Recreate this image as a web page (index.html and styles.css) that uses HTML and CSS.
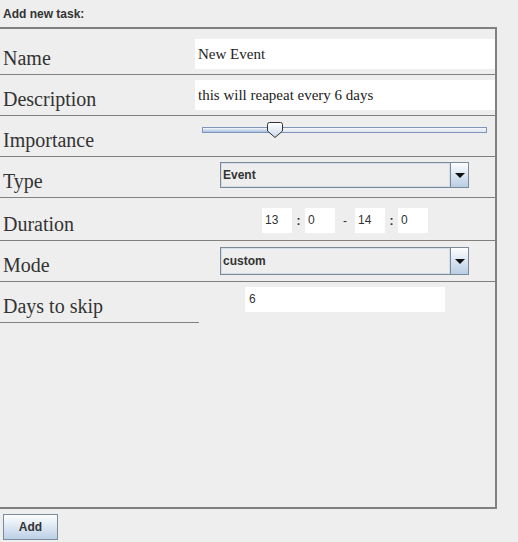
FILE: index.html
```html
<!DOCTYPE html>
<html>
<head>
<meta charset="utf-8">
<title>Add new task</title>
<link rel="stylesheet" href="styles.css">
</head>
<body>
<div class="title">Add new task:</div>
<div class="panel">
  <div class="row r1">
    <div class="label">Name</div>
    <div class="cell"><div class="field">New Event</div></div>
  </div>
  <div class="row r2">
    <div class="label">Description</div>
    <div class="cell"><div class="field">this will reapeat every 6 days</div></div>
  </div>
  <div class="row r3">
    <div class="label">Importance</div>
    <div class="cell">
      <div class="slider">
        <div class="track"><div class="fill"></div></div>
        <svg class="thumb" width="16" height="16" viewBox="0 0 16 16">
          <defs>
            <linearGradient id="tg" x1="0" y1="0" x2="0" y2="1">
              <stop offset="0" stop-color="#ffffff"/>
              <stop offset="1" stop-color="#c9d8ec"/>
            </linearGradient>
          </defs>
          <path d="M2.5 0.5 H13.5 Q15.5 0.5 15.5 2.5 V9 L8 15.5 L0.5 9 V2.5 Q0.5 0.5 2.5 0.5 Z" fill="url(#tg)" stroke="#333" stroke-width="1"/>
        </svg>
      </div>
    </div>
  </div>
  <div class="row r4">
    <div class="label">Type</div>
    <div class="cell">
      <div class="combo">
        <div class="combo-text">Event</div>
        <div class="combo-btn"><span class="arrow"></span></div>
      </div>
    </div>
  </div>
  <div class="row r5">
    <div class="label">Duration</div>
    <div class="cell">
      <div class="duration">
        <div class="num">13</div>
        <span class="sep colon">:</span>
        <div class="num">0</div>
        <span class="sep dash">-</span>
        <div class="num">14</div>
        <span class="sep colon">:</span>
        <div class="num">0</div>
      </div>
    </div>
  </div>
  <div class="row r6">
    <div class="label">Mode</div>
    <div class="cell">
      <div class="combo tall">
        <div class="combo-text">custom</div>
        <div class="combo-btn"><span class="arrow"></span></div>
      </div>
    </div>
  </div>
  <div class="row r7">
    <div class="label">Days to skip</div>
    <div class="cell"><div class="days">6</div></div>
  </div>
</div>
<div class="footer"><button class="btn">Add</button></div>
</body>
</html>
```

FILE: styles.css
```css
html, body {
  margin: 0;
  padding: 0;
}
body {
  background: #eeeeee;
  width: 518px;
  height: 542px;
  overflow: hidden;
  font-family: "Liberation Sans", Arial, sans-serif;
  color: #333;
}
.title {
  height: 27px;
  box-sizing: border-box;
  padding: 7px 0 0 3px;
  font-size: 12px;
  line-height: 14px;
  font-weight: bold;
  color: #333;
}
.panel {
  width: 495px;
  height: 478px;
  border: 2px solid #808080;
  border-left: 0;
}
.row {
  display: grid;
  grid-template-columns: 199px 1fr;
  box-sizing: border-box;
  border-bottom: 1px solid #808080;
  height: 41px;
}
.r1 { height: 46px; }
.r5 { height: 43px; }
.r7 {
  border-bottom: 0;
  height: 41px;
}
.label {
  display: flex;
  align-items: flex-end;
  box-sizing: border-box;
  padding: 0 0 6px 3px;
  font-family: "Liberation Serif", "Times New Roman", serif;
  font-size: 20px;
  line-height: 20px;
  color: #333;
}
.r7 .label {
  border-bottom: 1px solid #808080;
}
.cell {
  display: flex;
  align-items: flex-start;
}
.field {
  margin-left: -4px;
  width: calc(100% + 4px);
  height: 30px;
  box-sizing: border-box;
  padding-left: 3px;
  background: #ffffff;
  font-family: "Liberation Serif", "Times New Roman", serif;
  font-size: 15px;
  line-height: 30px;
  color: #222;
  white-space: nowrap;
}
.r1 .field { margin-top: 10px; }
.r2 .field { margin-top: 5px; }

.slider {
  position: relative;
  margin: 6px 0 0 3px;
  width: 285px;
  height: 16px;
}
.track {
  margin-top: 5px;
  height: 6px;
  box-sizing: border-box;
  border: 1px solid #7f95ba;
  background: linear-gradient(#f3f5f9, #dfe5ee);
}
.fill {
  width: 72px;
  height: 100%;
  background: linear-gradient(#f4f7fc, #a8bfe0);
}
.thumb {
  position: absolute;
  left: 65px;
  top: 0;
  display: block;
}

.combo {
  margin: 5px 0 0 21px;
  width: 249px;
  height: 26px;
  box-sizing: border-box;
  border: 1px solid #7a8a99;
  display: flex;
  background: #eeeeee;
}
.combo.tall {
  margin-top: 6px;
  height: 28px;
}
.combo-text {
  flex: 1;
  border: 1px solid #d2dde9;
  display: flex;
  align-items: center;
  padding-left: 1px;
  font-size: 12px;
  font-weight: bold;
  color: #333;
}
.combo-btn {
  width: 18px;
  box-sizing: border-box;
  border-left: 1px solid #7a8a99;
  background: linear-gradient(#fdfeff, #b8cde4);
  display: flex;
  align-items: center;
  justify-content: center;
}
.arrow {
  width: 0;
  height: 0;
  border-left: 5px solid transparent;
  border-right: 5px solid transparent;
  border-top: 5px solid #111;
  margin-top: 1px;
}

.duration {
  display: flex;
  align-items: center;
  margin: 10px 0 0 63px;
}
.num {
  width: 30px;
  height: 25px;
  box-sizing: border-box;
  padding-left: 3px;
  background: #ffffff;
  font-size: 12px;
  line-height: 25px;
  color: #333;
}
.sep {
  text-align: center;
  font-size: 12px;
  color: #333;
}
.colon {
  width: 13px;
  font-weight: bold;
}
.dash {
  width: 20px;
}
.days {
  margin: 5px 0 0 46px;
  width: 200px;
  height: 25px;
  box-sizing: border-box;
  padding-left: 4px;
  background: #ffffff;
  font-size: 12px;
  line-height: 25px;
  color: #333;
}
.footer {
  padding: 5px 0 0 3px;
}
.btn {
  display: block;
  margin: 0;
  padding: 0;
  width: 55px;
  height: 26px;
  border: 1px solid #7a8a99;
  border-radius: 0;
  background: linear-gradient(#fdfeff, #bcd0e6);
  font-family: "Liberation Sans", Arial, sans-serif;
  font-size: 12px;
  font-weight: bold;
  color: #333;
}
```
